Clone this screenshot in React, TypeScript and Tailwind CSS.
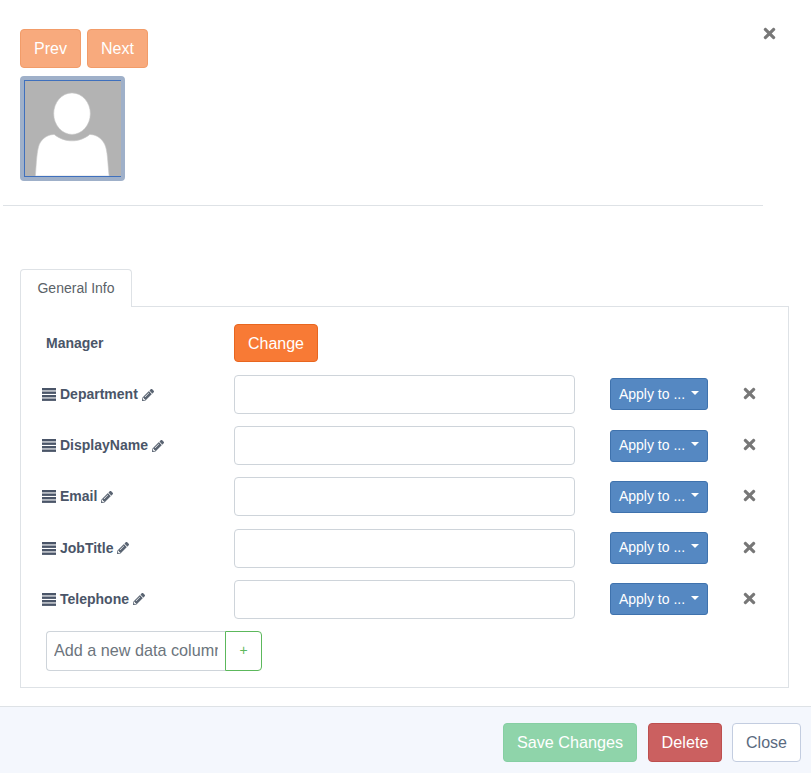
import { FaPencilAlt, FaTimes } from 'react-icons/fa';

const fields = ['Department', 'DisplayName', 'Email', 'JobTitle', 'Telephone'];

function Avatar() {
  return (
    <div className="w-[105px] h-[105px] rounded-[4px] border-4 border-[#9fb0c9] bg-[#9fb0c9]">
      <div className="w-full h-full border-y border-l border-[#3f70bd] bg-[#b3b3b3] overflow-hidden">
        <svg viewBox="0 0 96 96" className="w-full h-full block">
          <path
            d="M10 96 C11 82 11.500 70 14 64 C17 57 24 54 29 54 C34 58 40 60.500 47 60.500 C54 60.500 60 58 65 54 C70 54 77 57 80 64 C83 70 83 82 84.500 96 Z"
            fill="#fff"
            stroke="#c8c8c8"
            strokeWidth="0.600"
          />
          <ellipse cx="47" cy="33" rx="18.500" ry="21" fill="#fff" stroke="#c8c8c8" strokeWidth="0.600" />
        </svg>
      </div>
    </div>
  );
}

// four stacked bars, heavier than the icon-pack hamburger
function BarsIcon() {
  return (
    <svg viewBox="0 0 14 13" className="w-[14px] h-[13px] mr-[4px] shrink-0" fill="currentColor">
      <rect x="0" y="0" width="14" height="2.400" />
      <rect x="0" y="3.500" width="14" height="2.400" />
      <rect x="0" y="7" width="14" height="2.400" />
      <rect x="0" y="10.500" width="14" height="2.400" />
    </svg>
  );
}

function FieldRow({ name }: { name: string }) {
  return (
    <div className="flex items-center h-[39px]">
      <div className="w-[192px] flex items-center text-[#4a5568] text-[14px] font-bold">
        <BarsIcon />
        <span>{name}</span>
        <FaPencilAlt className="w-[12px] h-[12px] ml-[4px] text-[#5a6472]" />
      </div>
      <input className="w-[341px] h-[39px] rounded-[4px] border border-[#ced4da] bg-white" />
      <button className="ml-[35px] mb-[0.200px] w-[98px] h-[32px] rounded-[3px] bg-[#5588c2] border border-[#3f72ad] text-white text-[14px] flex items-center justify-center">
        Apply to ...
        <span className="ml-[6px] mb-[3px] border-x-[4px] border-x-transparent border-t-[4px] border-t-white" />
      </button>
      <FaTimes className="ml-[33px] mb-[2px] w-[17px] h-[17px] text-[#777777]" />
    </div>
  );
}

export default function App() {
  return (
    <div className="w-[811px] h-[773px] bg-white flex flex-col font-['Liberation_Sans',Arial,sans-serif]">
      <div className="relative flex-1 min-h-0">
        <FaTimes className="absolute left-[761px] top-[25px] w-[17px] h-[17px] text-[#777777]" />

        <div className="pl-[20px] pt-[29px]">
          <div className="flex gap-[6px]">
            <button className="w-[61px] h-[39px] pt-[1px] rounded-[4px] bg-[#f8aa7d] border border-[#f29c69] text-white text-[16px]">Prev</button>
            <button className="w-[61px] h-[39px] pt-[1px] rounded-[4px] bg-[#f8aa7d] border border-[#f29c69] text-white text-[16px]">Next</button>
          </div>
          <div className="mt-[8px]">
            <Avatar />
          </div>
        </div>

        <div className="ml-[3px] mt-[24px] w-[760px] border-t border-[#dee2e6]" />

        <div className="ml-[20px] mt-[63px] w-[769px]">
          <div className="relative z-10 w-[112px] h-[38px] rounded-t-[4px] border border-b-0 border-[#dee2e6] bg-white flex items-center justify-center text-[14px] text-[#5a6268]">
            General Info
          </div>
          <div className="-mt-px h-[382px] border border-[#dee2e6] pl-[21px] pt-[17px]">
            <div className="flex items-center h-[38px]">
              <div className="w-[192px] pl-[4px] pt-[1px] text-[#4a5568] text-[14px] font-bold">Manager</div>
              <button className="w-[84px] h-[38px] pt-[1px] rounded-[4px] bg-[#f87a35] border border-[#e8661f] text-white text-[16px]">Change</button>
            </div>
            <div className="mt-[13px] flex flex-col gap-[12.200px]">
              {fields.map((f) => (
                <FieldRow key={f} name={f} />
              ))}
            </div>
            <div className="ml-[4px] mt-[12px] flex h-[40px] w-[216px]">
              <input
                placeholder="Add a new data column"
                className="w-[179px] h-full rounded-l-[4px] border border-r-0 border-[#ced4da] px-[7px] text-[16.200px] text-[#495057] placeholder:text-[#6c757d] outline-none"
              />
              <button className="w-[37px] h-full rounded-r-[4px] border border-[#5cb85c] text-[#5cb85c] text-[14px]">+</button>
            </div>
          </div>
        </div>
      </div>

      <div className="h-[67px] shrink-0 border-t border-[#dee2e6] bg-[#f4f7fd] flex justify-end pt-[16px] pr-[10px]">
        <button className="w-[134px] h-[39px] rounded-[4px] bg-[#8fd4aa] border border-[#86cfa3] text-white text-[16.200px]">Save Changes</button>
        <button className="ml-[11px] w-[74px] h-[39px] rounded-[4px] bg-[#cb6060] border border-[#bd4f4f] text-white text-[16.200px]">Delete</button>
        <button className="ml-[10px] w-[69px] h-[39px] rounded-[4px] bg-white border border-[#c3cde0] text-[#5a6a80] text-[16px]">Close</button>
      </div>
    </div>
  );
}
